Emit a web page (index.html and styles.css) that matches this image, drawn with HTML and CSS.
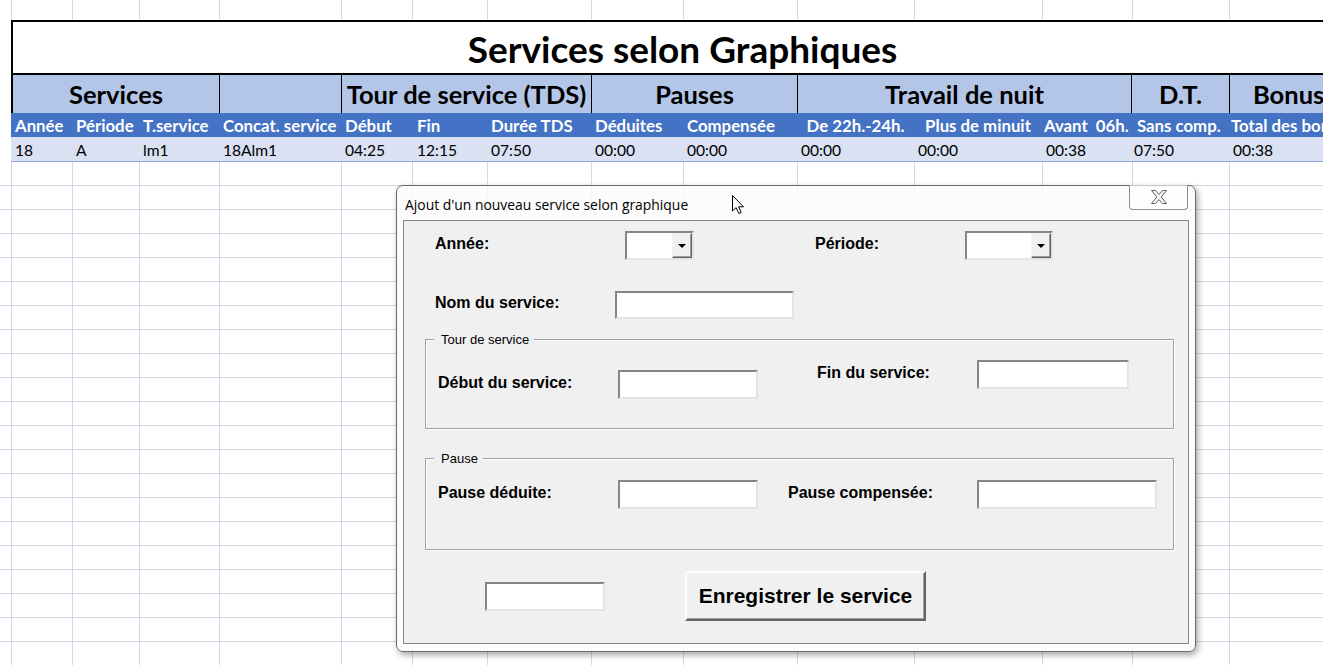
FILE: index.html
```html
<!DOCTYPE html>
<html lang="fr">
<head>
  <meta charset="UTF-8">
  <meta name="viewport" content="width=device-width, initial-scale=1.0">
  <title>Services selon Graphiques</title>
  <link rel="stylesheet" href="styles.css">
</head>
<body>
  <div class="sheet">
    <div class="top-row"></div>
    <div class="title-row">Services selon Graphiques</div>

    <div class="group-row">
      <div class="grp">Services</div>
      <div class="grp"></div>
      <div class="grp">Tour de service (TDS)</div>
      <div class="grp">Pauses</div>
      <div class="grp">Travail de nuit</div>
      <div class="grp">D.T.</div>
      <div class="grp bonus">Bonus</div>
    </div>

    <div class="cells head-row">
      <div>Année</div>
      <div>Période</div>
      <div>T.service</div>
      <div>Concat. service</div>
      <div>Début</div>
      <div class="pad5">Fin</div>
      <div>Durée TDS</div>
      <div>Déduites</div>
      <div>Compensée</div>
      <div class="mid">De 22h.-24h.</div>
      <div class="mid">Plus de minuit</div>
      <div class="tight">Avant&nbsp; 06h.</div>
      <div class="pad5">Sans comp.</div>
      <div class="tight">Total des bonus</div>
    </div>

    <div class="cells data-row">
      <div>18</div>
      <div>A</div>
      <div>lm1</div>
      <div>18Alm1</div>
      <div>04:25</div>
      <div class="pad5">12:15</div>
      <div>07:50</div>
      <div>00:00</div>
      <div>00:00</div>
      <div>00:00</div>
      <div>00:00</div>
      <div>00:38</div>
      <div class="tight">07:50</div>
      <div>00:38</div>
    </div>

    <div class="empty-rows"></div>
  </div>

  <div class="dialog">
    <div class="titlebar">
      <span class="caption">Ajout d'un nouveau service selon graphique</span>
      <div class="close">
        <svg width="18" height="16" viewBox="0 0 18 16">
          <polygon points="1.5,1.5 5.5,1.5 9,5.4 12.5,1.5 16.5,1.5 11.2,8 16.5,14.5 12.5,14.5 9,10.6 5.5,14.5 1.5,14.5 6.8,8" fill="#f7f7f7" stroke="#5e5e5e" stroke-width="1" stroke-linejoin="round"/>
        </svg>
      </div>
    </div>

    <div class="client">
      <div class="line first">
        <label class="lbl w190">Année:</label>
        <div class="combo w69"><span class="drop"><i></i></span></div>
        <label class="lbl periode">Période:</label>
        <div class="combo w88"><span class="drop"><i></i></span></div>
      </div>

      <div class="line second">
        <label class="lbl w180">Nom du service:</label>
        <div class="textbox nom"></div>
      </div>

      <div class="frame">
        <div class="frame-cap">Tour de service</div>
        <div class="frame-body">
          <div class="field debut">
            <label class="lbl w180">Début du service:</label>
            <div class="textbox w140"></div>
          </div>
          <div class="field fin">
            <label class="lbl w160">Fin du service:</label>
            <div class="textbox w152"></div>
          </div>
        </div>
      </div>

      <div class="frame pause">
        <div class="frame-cap">Pause</div>
        <div class="frame-body">
          <div class="field deduite">
            <label class="lbl w180">Pause déduite:</label>
            <div class="textbox w140"></div>
          </div>
          <div class="field compensee">
            <label class="lbl w189">Pause compensée:</label>
            <div class="textbox w180"></div>
          </div>
        </div>
      </div>

      <div class="line actions">
        <div class="textbox small"></div>
        <button class="save">Enregistrer le service</button>
      </div>
    </div>
  </div>

  <svg class="cursor" width="13" height="20" viewBox="0 0 13 20">
    <path d="M0.5,0.5 L0.5,16 L4.2,12.6 L6.8,18.6 L9.2,17.6 L6.7,11.8 L11.5,11.8 Z" fill="#fff" stroke="#000" stroke-width="1" stroke-linejoin="miter"/>
  </svg>
</body>
</html>
```

FILE: styles.css
```css
body {
  margin: 0;
  background-color: #fff;
  overflow: hidden;
  font-family: 'Lato', 'Liberation Sans', sans-serif;
}
.sheet {
  width: 1323px;
  height: 665px;
  overflow: hidden;
  background-image:
    linear-gradient(#d0d7e5, #d0d7e5), linear-gradient(#d0d7e5, #d0d7e5),
    linear-gradient(#d0d7e5, #d0d7e5), linear-gradient(#d0d7e5, #d0d7e5),
    linear-gradient(#d0d7e5, #d0d7e5), linear-gradient(#d0d7e5, #d0d7e5),
    linear-gradient(#d0d7e5, #d0d7e5), linear-gradient(#d0d7e5, #d0d7e5),
    linear-gradient(#d0d7e5, #d0d7e5), linear-gradient(#d0d7e5, #d0d7e5),
    linear-gradient(#d0d7e5, #d0d7e5), linear-gradient(#d0d7e5, #d0d7e5),
    linear-gradient(#d0d7e5, #d0d7e5), linear-gradient(#d0d7e5, #d0d7e5);
  background-size: 1px 100%;
  background-repeat: no-repeat;
  background-position:
    11px 0, 72px 0, 139px 0, 219px 0, 341px 0, 412px 0, 487px 0,
    591px 0, 683px 0, 797px 0, 914px 0, 1042px 0, 1132px 0, 1229px 0;
}
.top-row {
  height: 20px;
}
.title-row {
  margin-left: 11px;
  width: 1341px;
  height: 55px;
  box-sizing: border-box;
  border: 2px solid #000;
  border-right: none;
  background-color: #fff;
  display: flex;
  align-items: center;
  justify-content: center;
  padding-top: 2px;
  font-size: 37px;
  font-weight: bold;
  color: #000;
}
.group-row {
  margin-left: 11px;
  height: 38px;
  display: grid;
  grid-template-columns: 206px 122px 250px 206px 334px 98px 200px;
  border-left: 2px solid #000;
  background-color: #b4c6e7;
}
.grp {
  display: flex;
  align-items: center;
  justify-content: center;
  font-size: 25.5px;
  font-weight: bold;
  color: #000;
  white-space: nowrap;
}
.grp + .grp {
  border-left: 1px solid #000;
}
.grp.bonus {
  justify-content: flex-start;
  padding-left: 23px;
}
.cells {
  margin-left: 11px;
  height: 24px;
  display: grid;
  grid-template-columns: 61px 67px 80px 122px 71px 75px 104px 92px 114px 117px 128px 90px 97px 200px;
  white-space: nowrap;
}
.cells div {
  padding-left: 4px;
  line-height: 24px;
}
.cells .pad5 {
  padding-left: 5px;
}
.cells .tight {
  padding-left: 2px;
}
.cells .mid {
  padding-left: 0;
  text-align: center;
}
.head-row {
  background-color: #4472c4;
  color: #fff;
  font-size: 16.8px;
  font-weight: bold;
  padding-top: 1px;
  box-sizing: border-box;
}
.data-row {
  background-color: #d9e1f2;
  color: #000;
  font-size: 15.6px;
  border-bottom: 1px solid #8ea9db;
  height: 25px;
  box-sizing: border-box;
  padding-top: 2px;
}
.data-row div {
  line-height: 22px;
}
.empty-rows {
  height: 503px;
  background: repeating-linear-gradient(to bottom, transparent 0, transparent 23px, #d0d7e5 23px, #d0d7e5 24px);
}

/* userform */
.dialog {
  position: absolute;
  left: 396px;
  top: 185px;
  width: 800px;
  height: 467px;
  box-sizing: border-box;
  padding: 0 6px 7px;
  border: 1px solid #6b6b6b;
  border-radius: 7px;
  background-color: rgba(252, 252, 252, 0.88);
  box-shadow: 2px 3px 6px rgba(0, 0, 0, 0.35);
}
.titlebar {
  margin: 0 -6px;
  height: 34px;
  display: flex;
  justify-content: space-between;
  align-items: flex-start;
}
.caption {
  margin-top: 9px;
  padding-left: 8px;
  font-family: 'Open Sans', 'Liberation Sans', sans-serif;
  font-size: 13.9px;
  color: #000;
}
.close {
  margin: -1px 7px 0 0;
  width: 59px;
  height: 25px;
  box-sizing: border-box;
  border: 1px solid #8e8e8e;
  border-top: none;
  border-radius: 0 0 4px 4px;
  background-color: rgba(255, 255, 255, 0.6);
  display: flex;
  align-items: center;
  justify-content: center;
  padding-bottom: 1px;
}
.client {
  height: 424px;
  box-sizing: border-box;
  border: 1px solid #888;
  background-color: #f0f0f0;
  overflow: hidden;
  font-family: 'Liberation Sans', Arial, sans-serif;
}
.line {
  display: flex;
  align-items: center;
}
.line.first {
  margin-top: 10px;
  padding-left: 31px;
}
.line.second {
  margin-top: 31px;
  padding-left: 31px;
}
.lbl {
  flex-shrink: 0;
  padding-bottom: 4px;
  font-size: 16px;
  font-weight: bold;
  color: #000;
  white-space: nowrap;
}
.w160 { width: 160px; }
.w180 { width: 180px; }
.w189 { width: 189px; }
.w190 { width: 190px; }
.lbl.periode {
  margin-left: 121px;
  width: 150px;
}
.combo {
  height: 29px;
  box-sizing: border-box;
  border: 2px solid;
  border-color: #858585 #e4e4e4 #e4e4e4 #858585;
  background-color: #fff;
  display: flex;
  justify-content: flex-end;
}
.w69 { width: 69px; }
.w88 { width: 88px; }
.drop {
  width: 20px;
  box-sizing: border-box;
  border: 1px solid;
  border-color: #f4f4f4 #5f5f5f #5f5f5f #f4f4f4;
  box-shadow: inset -1px -1px 0 #a0a0a0;
  background-color: #f0f0f0;
  display: flex;
  align-items: center;
  justify-content: center;
}
.drop i {
  width: 0;
  height: 0;
  border-left: 4px solid transparent;
  border-right: 4px solid transparent;
  border-top: 4px solid #000;
}
.textbox {
  height: 29px;
  flex-shrink: 0;
  box-sizing: border-box;
  border: 2px solid;
  border-color: #858585 #e4e4e4 #e4e4e4 #858585;
  background-color: #fff;
}
.textbox.nom {
  width: 179px;
  height: 28px;
}
.w140 { width: 140px; }
.w152 { width: 152px; }
.w180.textbox { width: 180px; }
.frame {
  margin: 20px 0 0 21px;
  width: 749px;
  height: 90px;
  box-sizing: border-box;
  border: 1px solid #a0a0a0;
  box-shadow: 1px 1px 0 #fff, inset 1px 1px 0 #fff;
}
.frame.pause {
  margin-top: 29px;
  height: 92px;
}
.frame-cap {
  display: table;
  margin: -8px 0 0 8px;
  padding: 0 5px 0 7px;
  line-height: 15px;
  background-color: #f0f0f0;
  font-size: 13px;
  color: #000;
}
.frame-body {
  display: flex;
  align-items: flex-start;
  padding-left: 12px;
}
.field {
  display: flex;
  align-items: center;
}
.field.debut {
  margin-top: 23px;
}
.field.fin {
  margin: 13px 0 0 59px;
}
.field.deduite {
  margin-top: 14px;
}
.field.compensee {
  margin: 14px 0 0 30px;
}
.line.actions {
  margin-top: 21px;
  padding-left: 81px;
}
.textbox.small {
  width: 120px;
}
.save {
  margin-left: 80px;
  width: 241px;
  height: 50px;
  box-sizing: border-box;
  border: 2px solid;
  border-color: #fcfcfc #656565 #656565 #fcfcfc;
  box-shadow: inset -1px -1px 0 #a0a0a0;
  background-color: #f0f0f0;
  font-family: 'Liberation Sans', Arial, sans-serif;
  font-size: 21px;
  font-weight: bold;
  color: #000;
  padding: 0 0 0;
}
.cursor {
  position: absolute;
  left: 732px;
  top: 195px;
}
```
